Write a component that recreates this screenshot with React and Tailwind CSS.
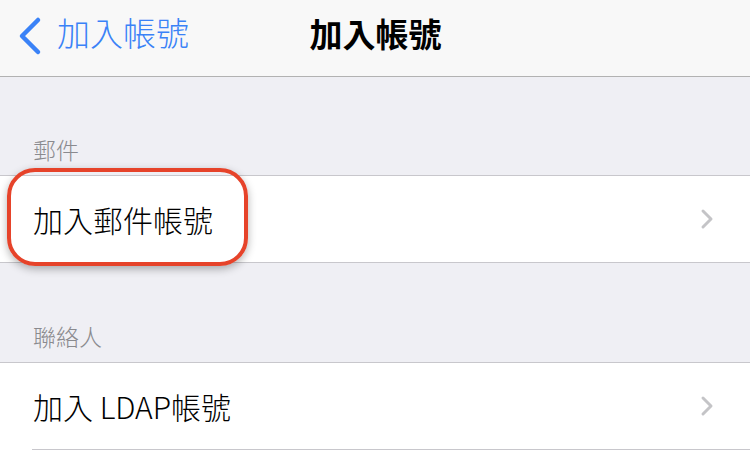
export default function App() {
    const font = { fontFamily: '"Noto Sans CJK TC", "Noto Sans", sans-serif' };
    const Chevron = () => (
        <svg width="14" height="22" viewBox="0 0 14 22" className="shrink-0">
            <path d="M3 3 L11 11 L3 19" fill="none" stroke="#c4c4c7" strokeWidth="3" strokeLinecap="round" strokeLinejoin="round" />
        </svg>
    );
    return (
        <div className="w-[750px] h-[454px] overflow-hidden bg-[#efeff4]" style={font}>
            <div className="h-[77px] bg-[#f8f8f8] border-b border-[#b2b2b2] relative flex items-center">
                <div className="flex items-center pl-[16px] -mt-[4px] text-[#3a82f7]">
                    <svg width="28" height="40" viewBox="0 0 28 40">
                        <path d="M22 4 L6 20 L22 36" fill="none" stroke="#3a82f7" strokeWidth="4.5" strokeLinecap="round" strokeLinejoin="round" />
                    </svg>
                    <span className="ml-[13px] text-[33px] font-light leading-none -mt-[8px]">加入帳號</span>
                </div>
                <div className="absolute left-0 right-0 top-0 h-[67px] flex items-center justify-center pointer-events-none">
                    <span className="text-[33px] font-bold text-black leading-none pl-[1px]">加入帳號</span>
                </div>
            </div>
            <div className="h-[98px] flex items-end pl-[33px] pb-[14px]">
                <span className="text-[23px] font-light text-[#8a8a8e] leading-none">郵件</span>
            </div>
            <div className="relative bg-white border-y border-[#c8c7cc] h-[88px] flex items-center justify-between pl-[33px] pr-[36px]">
                <span className="text-[30px] font-light text-black leading-none">加入郵件帳號</span>
                <Chevron />
                <div className="absolute left-[7px] top-[-8px] w-[241px] h-[98px] rounded-[28px] border-[4px] border-[#e6432a] shadow-[0_3px_8px_rgba(0,0,0,0.3)]" />
            </div>
            <div className="h-[99px] flex items-end pl-[33px] pb-[14px]">
                <span className="text-[23px] font-light text-[#8a8a8e] leading-none">聯絡人</span>
            </div>
            <div className="bg-white border-t border-[#c8c7cc]">
                <div className="h-[86px] flex items-center justify-between pl-[33px] pr-[36px]">
                    <span className="text-[30px] font-light text-black leading-none">加入 LDAP帳號</span>
                    <Chevron />
                </div>
                <div className="ml-[32px] border-t border-[#c8c7cc] h-[10px]" />
            </div>
        </div>
    );
}
